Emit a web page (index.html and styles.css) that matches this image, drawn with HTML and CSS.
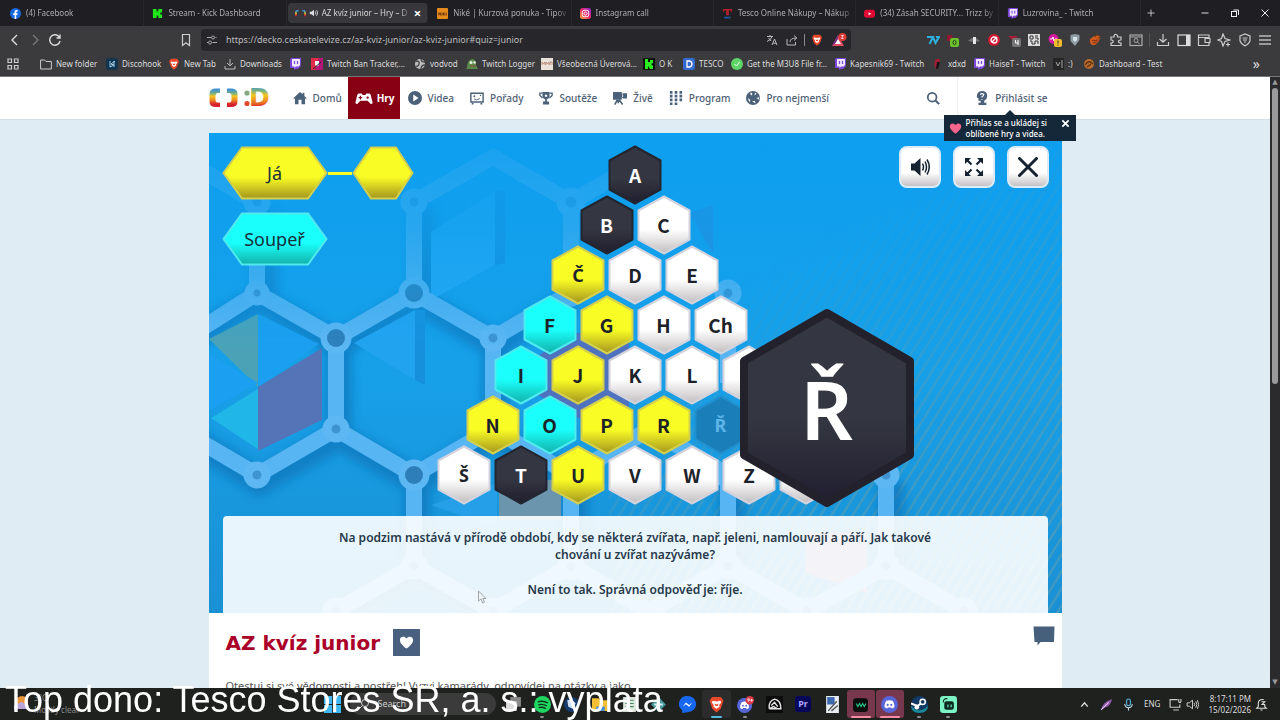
FILE: index.html
```html
<!DOCTYPE html>
<html lang="cs">
<head>
<meta charset="utf-8">
<title>AZ kvíz junior – Hry – Déčko</title>
<link rel="stylesheet" href="styles.css">
</head>
<body>
<svg class="defs" aria-hidden="true">
  <defs>
    <linearGradient id="gWhite" x1="0" y1="0" x2="0" y2="1"><stop offset=".58" stop-color="#fff"/><stop offset=".95" stop-color="#c9c5c7"/></linearGradient>
    <linearGradient id="gYellow" x1="0" y1="0" x2="0" y2="1"><stop offset=".58" stop-color="#fafd25"/><stop offset=".98" stop-color="#a89a1f"/></linearGradient>
    <linearGradient id="gCyan" x1="0" y1="0" x2="0" y2="1"><stop offset=".58" stop-color="#1afffb"/><stop offset=".98" stop-color="#12b5ad"/></linearGradient>
    <linearGradient id="gDark" x1="0" y1="0" x2="0" y2="1"><stop offset=".55" stop-color="#343741"/><stop offset=".95" stop-color="#232131"/></linearGradient>
    <linearGradient id="gRain" x1="0" y1="0" x2="0" y2="1"><stop offset=".05" stop-color="#3f8fd6"/><stop offset=".25" stop-color="#6fae8a"/><stop offset=".42" stop-color="#f3c61f"/><stop offset=".62" stop-color="#ee8a22"/><stop offset=".85" stop-color="#d8232f"/></linearGradient>
    <linearGradient id="gInsta" x1="0" y1="1" x2="1" y2="0"><stop offset="0" stop-color="#fdb03c"/><stop offset=".5" stop-color="#e8266b"/><stop offset="1" stop-color="#8a2be0"/></linearGradient>
  </defs>
  <symbol id="hex" viewBox="0 0 54 60"><path d="M27 1.500 52.500 15.500V44.500L27 58.500 1.500 44.500V15.500Z" stroke-width="2" stroke-linejoin="round"/></symbol>
  <symbol id="twitch" viewBox="0 0 12 12"><path d="M2 0h10v8l-3 3H7l-2 1V10H1V2Z" fill="#7b45d8"/><path d="M3 1h8v6L9.500 8.500H7L5.500 10V8.500H3Z" fill="#efe6ff"/><path d="M5.500 3v3M8.500 3v3" stroke="#7b45d8" stroke-width="1.200"/></symbol>
  <symbol id="kick" viewBox="0 0 12 12"><path d="M1 1h4v3h1V3h1V1h4v4H9v2h2v4H7V9H6V8H5v3H1Z" fill="#1fe81a"/></symbol>
  <symbol id="brave" viewBox="0 0 16 16"><path d="M4 1h8l1.500 1.500 1 2-.7 2L12 12l-4 3.500L4 12 2.200 6.500l-.7-2 1-2Z" fill="#e8492b"/><path d="M4.500 4.500 8 5.200l3.500-.7 1 1.500-2 2.500.3 1.500L8 12l-2.800-2 .3-1.500-2-2.500Z" fill="#fff"/><path d="M6 7l2 1 2-1-1 2.500H7Z" fill="#e8492b"/></symbol>
  <symbol id="discord" viewBox="0 0 16 16"><circle cx="8" cy="8" r="8" fill="#5865d8"/><path d="M5 4.500c2-.8 4-.8 6 0 1.300 2 1.800 4 1.600 6.200-.8.6-1.600 1-2.400 1.100l-.6-1H6.400l-.6 1c-.8-.1-1.600-.5-2.400-1.100C3.200 8.500 3.700 6.500 5 4.500Z" fill="#fff"/><circle cx="6.300" cy="8.300" r="1" fill="#5865d8"/><circle cx="9.700" cy="8.300" r="1" fill="#5865d8"/></symbol>
  <symbol id="heart" viewBox="0 0 16 16"><path d="M8 14.500C3 10.500 1 8 1 5.200 1 1.500 5.800.5 8 3.800 10.200.5 15 1.500 15 5.200 15 8 13 10.500 8 14.500Z"/></symbol>
</svg>

<header class="chrome">
  <div class="tabstrip">
    <div class="tabs" role="tablist">
      <button class="tab" role="tab"><svg viewBox="0 0 12 12"><circle cx="6" cy="6" r="6" fill="#1868e0"/><path d="M5 12V7.500H3.500V5.700H5V4.400C5 2.800 6 2.100 8.300 2.300V4H7.500C6.900 4 6.800 4.300 6.800 5.700H8.300L8 7.500H6.800V12Z" fill="#fff"/></svg><span>(4) Facebook</span></button>
      <button class="tab" role="tab"><svg><use href="#kick"/></svg><span>Stream - Kick Dashboard</span></button>
      <button class="tab active" role="tab" aria-selected="true"><svg viewBox="0 0 12 12"><path d="M4 3H2.500Q1 3 1 5v4M8 3h1.500Q11 3 11 5v4" fill="none" stroke="url(#gRain)" stroke-width="1.800"/></svg><svg class="sound" viewBox="0 0 12 12"><path d="M1 4.500h2L6 2v8L3 7.500H1Z" fill="#ddd"/><path d="M7.500 4Q9 6 7.500 8M9 2.500Q12 6 9 9.500" fill="none" stroke="#ddd"/></svg><span>AZ kvíz junior – Hry – D</span><b>×</b></button>
      <button class="tab" role="tab"><svg viewBox="0 0 12 12"><rect width="12" height="12" rx="1" fill="#e58a1c"/><path d="M2 8V5l2 3V5M5.500 5v3M7 5v3M9 5 7 6.500 9 8M10 8V5" stroke="#5a2c08" fill="none" stroke-width=".9"/></svg><span>Niké | Kurzová ponuka - Tipov</span></button>
      <button class="tab" role="tab"><svg viewBox="0 0 12 12"><rect width="12" height="12" rx="3" fill="url(#gInsta)"/><rect x="2.500" y="2.500" width="7" height="7" rx="2" fill="none" stroke="#fff"/><circle cx="6" cy="6" r="1.700" fill="none" stroke="#fff"/></svg><span>Instagram call</span></button>
      <button class="tab" role="tab"><svg viewBox="0 0 12 12"><path d="M1 1h10v3H9.500V2.500h-2V8h-3V2.500h-2V4H1Z" fill="#b3202c"/><path d="M2 9.500h8L8.500 11.500H3Z" fill="#17599c"/></svg><span>Tesco Online Nákupy – Nákup</span></button>
      <button class="tab" role="tab"><svg viewBox="0 0 12 12"><rect y="2" width="12" height="8.500" rx="2.500" fill="#e00a35"/><path d="m5 4.500 3 1.700-3 1.800Z" fill="#fff"/></svg><span>(34) Zásah SECURITY... Trizz by</span></button>
      <button class="tab" role="tab"><svg><use href="#twitch"/></svg><span>Luzrovina_ - Twitch</span></button>
    </div>
    <button class="newtab" aria-label="New tab"><svg viewBox="0 0 10 10"><path d="M5 1.500v7M1.500 5h7" stroke="#bbb"/></svg></button>
    <div class="winctl">
      <button aria-label="Minimize"><svg viewBox="0 0 10 10"><path d="M1.500 5h7" stroke="#ddd"/></svg></button>
      <button aria-label="Restore"><svg viewBox="0 0 10 10"><rect x="1.500" y="3.500" width="5" height="5" fill="none" stroke="#eee"/><path d="M3.500 2h5v5" fill="none" stroke="#eee"/></svg></button>
      <button aria-label="Close"><svg viewBox="0 0 10 10"><path d="m1.500 1.500 7 7m0-7-7 7" stroke="#eee"/></svg></button>
    </div>
  </div>

  <div class="toolbar">
    <div class="navbtns">
      <button aria-label="Back"><svg viewBox="0 0 14 14"><path d="M9 2 4 7l5 5" fill="none" stroke="#ddd" stroke-width="1.400"/></svg></button>
      <button aria-label="Forward"><svg viewBox="0 0 14 14"><path d="m5 2 5 5-5 5" fill="none" stroke="#77777b" stroke-width="1.400"/></svg></button>
      <button aria-label="Reload"><svg viewBox="0 0 14 14"><path d="M11.500 4.500A5.200 5.200 0 1 0 12 8M12 1.500v3.500H8.500" fill="none" stroke="#ddd" stroke-width="1.400"/></svg></button>
    </div>
    <button class="mark" aria-label="Bookmark"><svg viewBox="0 0 14 14"><path d="M3.500 1.500h7v11L7 9.800l-3.500 2.700Z" fill="none" stroke="#ccc" stroke-width="1.200"/></svg></button>
    <div class="urlbar">
      <svg viewBox="0 0 12 12"><path d="M1 3.500h4M9.500 3.500h1M1 8.500h1M6.500 8.500H11" stroke="#aaa"/><circle cx="7" cy="3.500" r="1.500" fill="none" stroke="#aaa"/><circle cx="4" cy="8.500" r="1.500" fill="none" stroke="#aaa"/></svg>
      <input aria-label="Address" value="https://decko.ceskatelevize.cz/az-kviz-junior/az-kviz-junior#quiz=junior">
      <button aria-label="Translate"><svg viewBox="0 0 12 12"><path d="M1 2.500h6M4 1v1.500M6 2.500Q5 6 1 7.500M2.500 4 5 7M6 11l2.500-6L11 11M7 9.200h3" fill="none" stroke="#bbb"/></svg></button>
      <button aria-label="Share"><svg viewBox="0 0 12 12"><path d="M1 5v6h8.500V8M4 8Q4 4 10.500 4M8 1.500 10.800 4 8 6.500" fill="none" stroke="#bbb"/></svg></button>
      <i></i>
      <button aria-label="Shields"><svg><use href="#brave"/></svg></button>
      <button aria-label="Rewards" class="wide"><svg viewBox="0 0 16 14"><path d="M7 2 13 13H1Z" fill="#e64a62"/><path d="M1 13 7 2v6.500Z" fill="#7a2d8c"/><path d="m7 6 3 5H4Z" fill="#fff"/><circle cx="11.500" cy="4" r="4" fill="#dd3a36"/><path d="M10.300 2.500h2L10.500 5.500h2" stroke="#fff" fill="none" stroke-width=".8"/></svg></button>
    </div>
    <div class="exts">
      <svg viewBox="0 0 14 14"><path d="M1 4h6L3.500 11M7.500 5l2 5 3.500-6h-3" fill="none" stroke="#2bb0df" stroke-width="2"/></svg>
      <svg viewBox="0 0 14 14"><path d="M1 2h5l1 6H1Z" fill="#8f1731"/><rect x="4" y="5" width="9" height="9" rx="2" fill="#6dc12c"/><ellipse cx="8.500" cy="9.500" rx="1.500" ry="2.200" fill="none" stroke="#24420d"/></svg>
      <svg viewBox="0 0 14 14"><path d="M1 8Q7 1 13 8Q7 10 1 8Z" fill="#6f7273"/><path d="M6 4h3v7H6Z" fill="#e6e6e6"/></svg>
      <svg viewBox="0 0 14 14"><circle cx="7" cy="7" r="6" fill="#d31834"/><circle cx="7" cy="7" r="3" fill="none" stroke="#fff" stroke-width="1.300"/><path d="m5 9 5-5" stroke="#fff" stroke-width="1.300"/></svg>
      <svg viewBox="0 0 14 14"><path d="M1 3h10L6 8Z" fill="#a61d36"/><rect x="5" y="5" width="9" height="9" rx="2" fill="#757575"/><path d="M8.500 7v3h3M11 7v5" stroke="#fff" fill="none"/></svg>
      <svg viewBox="0 0 14 14"><path d="M1 1h12v12H1Z" fill="#ddd"/><path d="M3 3h3v3H3ZM8 3h3M8 5h3v2M3 8h2v3h3V8h3v3" stroke="#333" fill="none"/></svg>
      <svg viewBox="0 0 14 14"><circle cx="5.500" cy="6" r="5" fill="#d21aa0"/><path d="M2 6h2l1-2 1 4 1-2h2" stroke="#fff" fill="none"/><rect x="6" y="6" width="8" height="8" rx="2" fill="#f1bd2c"/><path d="M10 7.500v3M10 11.500v1" stroke="#333"/></svg>
      <svg viewBox="0 0 14 14"><path d="M2.500 2 7 1l4.500 1v5L7 13 2.500 8Z" fill="#8e9da4"/><path d="M5 4h4v3L7 9 5 7Z" fill="#d6e4e8"/></svg>
      <svg viewBox="0 0 14 14"><path d="M2 6Q7 1 12 3Q12 9 7 12Q1 13 2 6Z" fill="#cb5a1c"/><path d="M7 4 9 1M10 5l3-2M4 8l6-1M5 10l4-1" stroke="#7d3311"/></svg>
      <svg viewBox="0 0 14 14"><path d="M2 4h3Q5 1 7 1.500T8.500 4H12v3q-2.500 0-2.500 1.500T12 10v2.500H2V10q2.200 0 2.200-1.600T2 7Z" fill="none" stroke="#ccc" stroke-width="1.200"/></svg>
      <svg viewBox="0 0 14 14"><rect x="1" y="2" width="12" height="10.500" fill="none" stroke="#aaa" stroke-width="1.200"/><path d="M1 4h12" stroke="#aaa"/><circle cx="7" cy="7.500" r="2" fill="none" stroke="#aaa"/><path d="m8.500 9 2 2" stroke="#aaa"/></svg>
      <i></i>
      <svg viewBox="0 0 14 14"><path d="M7 1v8M3.500 6 7 9.300 10.500 6M1.500 9v3.500h11V9" fill="none" stroke="#ccc" stroke-width="1.200"/></svg>
      <svg viewBox="0 0 14 14"><rect x="1" y="2" width="12" height="10.500" fill="none" stroke="#ddd" stroke-width="1.200"/><path d="M9 2h4v10.500H9Z" fill="#ddd"/></svg>
      <svg viewBox="0 0 14 14"><path d="M12 5V2H1.500v10.500H12V10M1.500 4.500H12M8 5.500h5v4H8Z" fill="none" stroke="#ccc" stroke-width="1.200"/></svg>
      <svg viewBox="0 0 14 14"><path d="M6 1 8 5.500 12.500 7 8 8.500 6 13 4.500 8.500 1 7 4.500 5.500ZM11 9.500v4M9 11.500h4" fill="none" stroke="#ccc" stroke-width="1.200"/></svg>
      <svg viewBox="0 0 14 14"><path d="M2 3 7 1l5 2v5q-1 3-5 5-4-2-5-5ZM4.500 5h5M5 7h4M6 9h2" fill="none" stroke="#ccc" stroke-width="1.200"/></svg>
      <svg viewBox="0 0 14 14"><path d="M1 3h12M1 7h12M1 11h12" stroke="#bbb" stroke-width="1.500"/></svg>
    </div>
  </div>

  <nav class="bookmarks" aria-label="Bookmarks">
    <a href="#" aria-label="All bookmarks"><svg viewBox="0 0 12 12"><path d="M1 1h3.500v3.500H1ZM7.500 1H11v3.500H7.500ZM1 7.500h3.500V11H1ZM7.500 7.500H11V11H7.500Z" fill="none" stroke="#ccc" stroke-width="1.200"/></svg></a>
    <a href="#"><svg viewBox="0 0 12 12"><path d="M.6 2H4.500L6 3.500h5.400V11H.6Z" fill="none" stroke="#ccc"/></svg>New folder</a>
    <a href="#"><svg viewBox="0 0 12 12"><rect width="12" height="12" rx="3" fill="#10354d"/><path d="M4 3v6l4-2-3-1 4-3M8 3v6" stroke="#9fd2e5" fill="none"/></svg>Discohook</a>
    <a href="#"><svg><use href="#brave"/></svg>New Tab</a>
    <a href="#"><svg viewBox="0 0 12 12"><path d="M6 1v6.500M3 5l3 2.800L9 5M1 8v3h10V8" fill="none" stroke="#bbb"/></svg>Downloads</a>
    <a href="#" aria-label="Twitch"><svg><use href="#twitch"/></svg></a>
    <a href="#"><svg viewBox="0 0 12 12"><path d="M0 0h12v12H0Z" fill="#b3157a"/><path d="M0 0h8L4 12H0Z" fill="#e02c48"/><path d="M4 3h4v4L6 8.500 4 7Z" fill="#fff"/><path d="m2 11 8-7" stroke="#222"/></svg>Twitch Ban Tracker,...</a>
    <a href="#"><svg viewBox="0 0 12 12"><circle cx="6" cy="6" r="5" fill="#bdbdbd"/><path d="M2 3q4 0 3 3t-3 2M7 1q0 3 4 3M7 11q0-4 4-4" stroke="#444" fill="none" stroke-width="1.300"/></svg>vodvod</a>
    <a href="#"><svg viewBox="0 0 12 12"><path d="M1 10Q1 2 6 1q5 1 4 6l2 4H0Z" fill="#598c48"/><circle cx="5" cy="4.500" r="1.500" fill="#e3efe0"/><circle cx="8.500" cy="4.500" r="1.300" fill="#e3efe0"/><path d="M4 8h6" stroke="#9c493b"/></svg>Twitch Logger</a>
    <a href="#"><svg viewBox="0 0 12 12"><path d="M0 0h12v12H0Z" fill="#ece2dc"/><path d="M1 7V4l1.500 2L4 4v3M5 7V4l1.500 2L8 4v3M9 7V4h2v3" stroke="#b5806f" fill="none" stroke-width=".8"/></svg>Všeobecná Úverová...</a>
    <a href="#"><svg viewBox="0 0 12 12"><path d="M0 0h12v12H0Z" fill="#071407"/><path d="M2 1h3v3h2V2h3v3L8 6l2 2v3H7L5 8v3H2Z" fill="#2bea22"/></svg>O K</a>
    <a href="#"><svg viewBox="0 0 12 12"><rect width="12" height="12" rx="2" fill="#356bd0"/><path d="M4 3h2.500Q9 3.500 9 6T6.500 9H4Z" fill="none" stroke="#fff" stroke-width="1.300"/></svg>TESCO</a>
    <a href="#"><svg viewBox="0 0 12 12"><circle cx="6" cy="6" r="6" fill="#5fd469"/><path d="m3.500 6 2 2 3-4" stroke="#e8ffe9" fill="none"/></svg>Get the M3U8 File fr...</a>
    <a href="#"><svg><use href="#twitch"/></svg>Kapesnik69 - Twitch</a>
    <a href="#"><svg viewBox="0 0 12 12"><path d="M3 2Q8-1 8 3L6 11Q1 11 3 2Z" fill="#a01f36"/><path d="M5 4h3L6 11H4Z" fill="#171417"/></svg>xdxd</a>
    <a href="#"><svg><use href="#twitch"/></svg>HaiseT - Twitch</a>
    <a href="#"><svg viewBox="0 0 12 12"><path d="M1 0h11v12H1Z" fill="#252525"/><path d="m4 4 2 4 2-4M10 2v8" stroke="#aaa" fill="none"/></svg>:)</a>
    <a href="#"><svg viewBox="0 0 12 12"><circle cx="6" cy="6" r="5" fill="#b76b2b"/><path d="M2 7q4-6 8-1M4 9l4-3" stroke="#5e3010" fill="none" stroke-width="1.300"/></svg>Dashboard - Test</a>
    <button aria-label="More bookmarks">»</button>
  </nav>
</header>

<div class="viewport">
  <div class="site">
    <header class="sitehead">
      <div class="wrap headrow">
        <a class="logo" href="#" aria-label="ČT :D"><svg viewBox="0 0 60 22"><path d="M11 1.500H7Q.5 1.500.5 7v7.500Q.5 20 7 20h4v-4.500H8.500Q6.500 15.500 6.500 13V8.500Q6.500 6 8.500 6H11ZM18 1.500h4Q28.500 1.500 28.500 7v7.500Q28.500 20 22 20h-4v-4.500h2.500q2 0 2-2.500V8.500Q22.500 6 20.500 6H18Z" fill="url(#gRain)"/><circle cx="38" cy="6" r="2.600" fill="#86a87e"/><circle cx="38" cy="16.500" r="2.600" fill="#e04a2c"/><text x="40" y="19" class="logo-d" fill="url(#gRain)">D</text></svg></a>
        <nav class="mainnav">
          <a href="#"><svg viewBox="0 0 16 16"><path d="M8 1 0 8.500h2.300V15h4V10h3.400v5h4V8.500H16L13 5.600V2h-2v1.800Z"/></svg>Domů</a>
          <a href="#" class="current"><svg viewBox="0 0 20 14"><path d="M4.500 1.500h3L8.500 3h3l1-1.500h3Q17 1.500 17.500 3L19.500 11.500Q19.500 13.500 17.500 13L14 9.500H6L2.500 13Q.5 13.500.5 11.500L2.500 3Q3 1.500 4.500 1.500Z"/><path d="M6 4v4M4 6h4" stroke="#870013" stroke-width="1.200"/><circle cx="14" cy="6" r="1.300" fill="#870013"/></svg>Hry</a>
          <a href="#"><svg viewBox="0 0 16 16"><path d="M8 0a8 8 0 1 0 0 16A8 8 0 0 0 8 0ZM6 4l6 4-6 4Z" fill-rule="evenodd"/></svg>Videa</a>
          <a href="#"><svg viewBox="0 0 16 16"><path d="M1 2.500h14v10H1ZM2 14.500h2M12 14.500h2" fill="none" stroke="#4a6179" stroke-width="1.600"/><circle cx="5" cy="6" r="1.100"/><circle cx="12" cy="5" r=".8"/><path d="M4.500 9q3 2 6 0l1-1" fill="none" stroke="#4a6179"/></svg>Pořady</a>
          <a href="#"><svg viewBox="0 0 16 16"><path d="M4 1h8v5.500Q11 9 9 9.500V12h2.500v3.500h-7V12H7V9.500Q5 9 4 6.500Z"/><path d="M4 2.500H1V5l3 3M12 2.500h3V5l-3 3" fill="none" stroke="#4a6179" stroke-width="1.500"/><path d="m8 3 .6 1.500H10L9 5.500l.3 1.500L8 6.200 6.700 7 7 5.500 6 4.500h1.400Z" fill="#fff"/></svg>Soutěže</a>
          <a href="#"><svg viewBox="0 0 16 16"><path d="M0 1h10v2.500l2-1h4v6h-4l-2-1V10H0Z"/><path d="m5 10-3 5.500M6 10v4M7 10l4 5.500" stroke="#4a6179" stroke-width="1.800"/><path d="M11 4v3" stroke="#fff"/></svg>Živě</a>
          <a href="#"><svg viewBox="0 0 16 16"><path d="M1 0h3v3H1ZM6.500 0h3v3h-3ZM12 0h3v3h-3ZM1 4.300h3v3H1ZM6.500 4.300h3v3h-3ZM12 4.300h3v3h-3ZM1 8.600h3v3H1ZM6.500 8.600h3v3h-3ZM12 8.600h3v3h-3ZM1 13h3v3H1ZM6.500 13h3v3h-3Z"/></svg>Program</a>
          <a href="#"><svg viewBox="0 0 16 16"><circle cx="8" cy="8" r="8"/><path d="M5 2h2v3L5 4ZM10 2l2 1-2 2ZM2 8l3 2-1 3ZM7 12l3-1 1 3ZM12 8l3-1v3Z" fill="#fff"/></svg>Pro nejmenší</a>
        </nav>
        <button class="find" aria-label="Hledat"><svg viewBox="0 0 16 16"><circle cx="7" cy="7" r="5" fill="none" stroke="#4a6179" stroke-width="2"/><path d="m10.500 10.500 4.500 4.500" stroke="#4a6179" stroke-width="2.400"/></svg></button>
        <div class="login">
          <a href="#"><svg viewBox="0 0 16 16"><path d="M8 0Q14 0 14 6q0 3-3.500 5v2.500H13V16H4v-2.500h2.500V11H4V8.500L2 7Q2 0 8 0Z"/><path d="M6 4q2-2 4 0 0 1.500-2 2.500v1M8 9v1" stroke="#fff" fill="none" stroke-width="1.300"/></svg>Přihlásit se</a>
          <div class="tip"><svg><use href="#heart"/></svg><p>Přihlas se a ukládej si<br>oblíbené hry a videa.</p><button aria-label="Zavřít"><svg viewBox="0 0 10 10"><path d="m1.500 1.500 7 7m0-7-7 7" stroke="#fff" stroke-width="2"/></svg></button></div>
        </div>
      </div>
    </header>

    <main class="wrap page">
      <section class="game">
        <svg class="scene" viewBox="0 0 853 480" preserveAspectRatio="xMidYMid slice" aria-hidden="true">
          <defs>
            <linearGradient id="sky" x1="0" y1="0" x2="0" y2="1"><stop offset="0" stop-color="#0d9ff0"/><stop offset=".5" stop-color="#17a0e8"/><stop offset="1" stop-color="#1a90d4"/></linearGradient>
            <linearGradient id="fadeV" x1="0" y1="0" x2="0" y2="1"><stop offset="0" stop-color="#222"/><stop offset=".2" stop-color="#555"/><stop offset=".45" stop-color="#fff"/></linearGradient>
            <mask id="mV"><rect width="853" height="480" fill="url(#fadeV)"/></mask>
            <linearGradient id="fadeD" x1=".4" y1=".15" x2=".8" y2=".9"><stop offset=".1" stop-color="#000"/><stop offset=".7" stop-color="#ddd"/></linearGradient>
            <mask id="mD"><rect x="400" width="453" height="480" fill="url(#fadeD)"/></mask>
            <pattern id="lines" width="9" height="9" patternUnits="userSpaceOnUse" patternTransform="rotate(32)"><path d="M1.500 0V9" stroke="#4f9cb8" stroke-width="2"/></pattern>
            <filter id="soft"><feGaussianBlur stdDeviation="5"/></filter>
          </defs>
          <rect width="853" height="480" fill="url(#sky)"/>
          <rect x="400" width="453" height="480" fill="url(#lines)" mask="url(#mD)"/>
          <g mask="url(#mV)">
            <g fill="none" stroke="#0b6fb4" stroke-width="26" opacity=".6" filter="url(#soft)">
              <path d="M-30 212 50 167 130 212 208 167 286 212 364 167M-30 298 50 349 130 304 208 349 286 304 364 349M130 212v92M286 212v92M208 349v92l78 40M208 441l-78 40M366 349v92M523 349v92M682 349v92M56 75v90M214 75v90"/>
            </g>
            <path d="M0 206 49 181V254Z" fill="#4ba2b6"/><path d="M49 254V181L110 211Z" fill="#1b9ff0"/><path d="M0 221 49 250 0 278Z" fill="#1b9ff0"/><path d="M49 254 113 215V287L49 318Z" fill="#5574b8"/><path d="M49 256V316L2 285Z" fill="#20b6e8"/>
            <path d="M206 177h10v75L206 247Z" fill="#1690db"/><path d="M145 210 206 177V247Z" fill="#22a3f0"/><path d="M286 58h10v72l-10 2Z" fill="#128cdc"/><path d="M222 99 286 58V132L222 167Z" fill="#25a9f6"/>
            <path d="M290 347h62v40h-62Z" fill="#6b94ad"/><path d="M222 372 288 350V395Z" fill="#259fe8"/><path d="M480 80 504 72V120Z" fill="#2b84d6"/><path d="M300 245 360 200H420V310L360 280Z" fill="#4f72bf"/><path d="M596 400h62v60l-62-20Z" fill="#8a82b5"/>
            <g fill="none" stroke="#58b5f3" stroke-width="16">
              <path d="M-30 210 48 160 127 205 205 160 284 205 362 160M-30 296 48 342 127 296 205 342 284 296 362 342 441 296 519 342M127 205v91M284 205v91M48 70v90M205 70v90M205 69 284 24 362 69V160M362 69 441 24M48 69-20 30M205 342v91L127 478M205 433l79 45 78-45V342M519 342v91l79 45 79-45V342M677 433l78 45M519 433l-79 45-78-45M519 160V250"/>
            </g>
            <g fill="#3f93d0" stroke="#5db7f3" stroke-width="9">
              <circle cx="48" cy="160" r="8"/><circle cx="127" cy="205" r="11"/><circle cx="205" cy="160" r="11"/><circle cx="284" cy="205" r="9"/><circle cx="362" cy="160" r="9"/><circle cx="48" cy="342" r="9"/><circle cx="127" cy="296" r="9"/><circle cx="205" cy="342" r="11"/><circle cx="48" cy="69" r="9"/><circle cx="205" cy="69" r="9"/><circle cx="362" cy="69" r="10"/><circle cx="205" cy="433" r="9"/><circle cx="127" cy="478" r="9"/><circle cx="284" cy="478" r="9"/><circle cx="362" cy="433" r="9"/><circle cx="519" cy="160" r="9"/><circle cx="519" cy="342" r="9"/><circle cx="519" cy="433" r="9"/><circle cx="598" cy="478" r="9"/><circle cx="677" cy="342" r="9"/><circle cx="677" cy="433" r="9"/><circle cx="755" cy="478" r="9"/>
            </g>
            <g fill="#2e7fb9"><circle cx="127" cy="205" r="9"/><circle cx="205" cy="160" r="9"/><circle cx="205" cy="342" r="9"/></g>
          </g>
        </svg>

        <div class="stage">
          <div class="players">
            <div class="player yellow"><svg viewBox="0 0 106 54"><path d="M20 1.500h66L104.500 27 86 52.500H20L1.500 27Z" stroke-width="2"/></svg><span>Já</span></div>
            <i class="link"></i>
            <div class="token yellow"><svg viewBox="0 0 62 54"><path d="M19 1.500h25L60.500 27 44 52.500H19L1.500 27Z" stroke-width="2"/></svg></div>
            <div class="player cyan"><svg viewBox="0 0 106 54"><path d="M20 1.500h66L104.500 27 86 52.500H20L1.500 27Z" stroke-width="2"/></svg><span>Soupeř</span></div>
          </div>
          <div class="board">
            <div class="row"><button class="cell dark"><svg><use href="#hex"/></svg><span>A</span></button></div>
            <div class="row"><button class="cell dark"><svg><use href="#hex"/></svg><span>B</span></button><button class="cell"><svg><use href="#hex"/></svg><span>C</span></button></div>
            <div class="row"><button class="cell yellow caron"><svg><use href="#hex"/></svg><span>Č</span></button><button class="cell"><svg><use href="#hex"/></svg><span>D</span></button><button class="cell"><svg><use href="#hex"/></svg><span>E</span></button></div>
            <div class="row"><button class="cell cyan"><svg><use href="#hex"/></svg><span>F</span></button><button class="cell yellow"><svg><use href="#hex"/></svg><span>G</span></button><button class="cell"><svg><use href="#hex"/></svg><span>H</span></button><button class="cell"><svg><use href="#hex"/></svg><span>Ch</span></button></div>
            <div class="row"><button class="cell cyan"><svg><use href="#hex"/></svg><span>I</span></button><button class="cell yellow"><svg><use href="#hex"/></svg><span>J</span></button><button class="cell"><svg><use href="#hex"/></svg><span>K</span></button><button class="cell"><svg><use href="#hex"/></svg><span>L</span></button><button class="cell" aria-label="M"><svg><use href="#hex"/></svg></button></div>
            <div class="row"><button class="cell yellow"><svg><use href="#hex"/></svg><span>N</span></button><button class="cell cyan"><svg><use href="#hex"/></svg><span>O</span></button><button class="cell yellow"><svg><use href="#hex"/></svg><span>P</span></button><button class="cell yellow"><svg><use href="#hex"/></svg><span>R</span></button><button class="cell open caron"><svg><use href="#hex"/></svg><span>Ř</span></button><button class="cell" aria-label="S"><svg><use href="#hex"/></svg></button></div>
            <div class="row"><button class="cell caron"><svg><use href="#hex"/></svg><span>Š</span></button><button class="cell dark"><svg><use href="#hex"/></svg><span>T</span></button><button class="cell yellow"><svg><use href="#hex"/></svg><span>U</span></button><button class="cell"><svg><use href="#hex"/></svg><span>V</span></button><button class="cell"><svg><use href="#hex"/></svg><span>W</span></button><button class="cell"><svg><use href="#hex"/></svg><span>Z</span></button><button class="cell" aria-label="Ž"><svg><use href="#hex"/></svg></button></div>
          </div>
          <div class="tools">
            <button aria-label="Zvuk"><svg viewBox="0 0 20 20"><path d="M1 6.500h3.500L10.500 1v18L4.500 13.500H1Z" fill="#14232f"/><path d="M12.500 6.500Q14.500 10 12.500 13.500M15 4.500Q18 10 15 15.500M17 2.500Q21.500 10 17 17.500" fill="none" stroke="#14232f" stroke-width="1.500"/></svg></button>
            <button aria-label="Celá obrazovka"><svg viewBox="0 0 20 20"><path d="M1 1h6L1 7ZM19 1h-6l6 6ZM1 19h6l-6-6ZM19 19h-6l6-6Z" fill="#14232f"/><path d="m2 2 5.500 5.500M18 2l-5.500 5.500M2 18l5.500-5.500M18 18l-5.500-5.500" stroke="#14232f" stroke-width="2.200"/></svg></button>
            <button aria-label="Zavřít hru"><svg viewBox="0 0 20 20"><path d="m1.500 1.500 17 17m0-17-17 17" stroke="#14232f" stroke-width="3" stroke-linecap="round"/></svg></button>
          </div>
        </div>

        <div class="bighex"><svg viewBox="0 0 176 200"><path d="M88 5 171 53V147L88 195 5 147V53Z" fill="url(#gDark)" stroke="#23212c" stroke-width="8" stroke-linejoin="round"/></svg><span>Ř</span></div>

        <div class="question">
          <p>Na podzim nastává v přírodě období, kdy se některá zvířata, např. jeleni, namlouvají a páří. Jak takové chování u zvířat nazýváme?</p>
          <p>Není to tak. Správná odpověď je: říje.</p>
        </div>
      </section>

      <section class="about">
        <div class="titlerow">
          <h1>AZ kvíz junior</h1>
          <button class="fav" aria-label="Oblíbené"><svg><use href="#heart"/></svg></button>
          <button class="chat" aria-label="Komentáře"><svg viewBox="0 0 22 20"><path d="M.5.500H21.500L21 16H7.500L4.500 19.500V16H1.500Z" fill="#465f7a"/></svg></button>
        </div>
        <p>Otestuj si své vědomosti a postřeh! Vyzvi kamarády, odpovídej na otázky a jako</p>
      </section>
    </main>
  </div>
  <div class="scrollbar"><b>▲</b><i></i><b>▼</b></div>
</div>

<footer class="taskbar">
  <div class="weather"><svg viewBox="0 0 18 18"><circle cx="10" cy="7" r="6" fill="#e9963a"/><path d="M2 14q-1-5 4-5 3-4 7 0 5 0 3 5Z" fill="#b9a5d8"/></svg><div>3°C<br>Mostly clear</div></div>
  <div class="apps">
    <button aria-label="Start"><svg viewBox="0 0 16 16"><path d="M0 0h7.600v7.600H0ZM8.400 0H16v7.600H8.400ZM0 8.400h7.600V16H0ZM8.400 8.400H16V16H8.400Z" fill="#3fb7f3"/></svg></button>
    <label class="search"><svg viewBox="0 0 12 12"><circle cx="7" cy="5" r="3.500" fill="none" stroke="#ccc"/><path d="M4.500 7.500 1 11" stroke="#ccc"/></svg><input placeholder="Search" aria-label="Search"></label>
    <button aria-label="Task view"><svg viewBox="0 0 16 16"><path d="M5 1h10v9H5Z" fill="#888"/><path d="M1 5h10v9H1Z" fill="#ddd"/></svg></button>
    <button class="run" aria-label="Spotify"><svg viewBox="0 0 16 16"><circle cx="8" cy="8" r="8" fill="#1ed760"/><path d="M3.500 5.500q5-1.500 9.500 1M4 8.300q4-1.200 8 .9M4.500 11q3.500-1 6.500.8" fill="none" stroke="#10331b" stroke-width="1.300"/></svg></button>
    <button aria-label="Game"><svg viewBox="0 0 16 16"><circle cx="8" cy="8" r="7" fill="#143a6e"/><path d="M4 4q5-1 8 3l-3 5-4-2Z" fill="#cfe0f5"/></svg></button>
    <button aria-label="Files"><svg viewBox="0 0 16 16"><path d="M0 2h6l2 2h8v10H0Z" fill="#f5c033"/><path d="M4 10h8v4H4Z" fill="#3d8de0"/></svg></button>
    <button aria-label="Sheet"><svg viewBox="0 0 16 16"><path d="M2 1h12v14H2Z" fill="#dfe8de"/><path d="M4 4h8M4 7h8M4 10h8" stroke="#4b8b66"/></svg></button>
    <button aria-label="App"><svg viewBox="0 0 16 16"><path d="m8 1 7 7-7 7-7-7Z" fill="#4c9ba0"/><path d="M8 4v8M4 8h8" stroke="#d3efec" stroke-width="2"/></svg></button>
    <button aria-label="Messenger"><svg viewBox="0 0 16 16"><path d="M8 0a8 7.500 0 0 1 0 15.200L3 16v-2.500A7.500 7.500 0 0 1 8 0Z" fill="#1868ef"/><path d="m3.500 10 3-4 3 2.500 3-2.500-3 4-3-2.300Z" fill="#fff"/></svg></button>
    <button class="on" aria-label="Brave"><svg><use href="#brave"/></svg></button>
    <button class="run" aria-label="Discord"><svg viewBox="0 0 18 18"><use href="#discord" y="2" width="16" height="16"/><circle cx="13.500" cy="4.500" r="4.500" fill="#d83a45"/><path d="M11.500 4.500h1.500V3h-1.500ZM13 4.500 12 6M14 4.500h3M15.500 3v3" stroke="#fff" fill="none" stroke-width=".8"/></svg></button>
    <button aria-label="Notes"><svg viewBox="0 0 16 16"><path d="M0 0h16v16H0Z" fill="#0c0c0c"/><path d="M3 12Q2 5 8 3q6 1 6 9H3M5 9l3-3 3 4M3 12l4-2 4 2" stroke="#e6e6e6" fill="none" stroke-width="1.300"/></svg></button>
    <button class="pr" aria-label="Premiere"><b>Pr</b></button>
    <button aria-label="Photo"><svg viewBox="0 0 16 16"><path d="M2 0h12v16H2Z" fill="#e9eef2"/><path d="M3 1h7v7H3Z" fill="#3c68b0"/><path d="m4 14 8-9M7 14l6-5" stroke="#555" stroke-width="1.300"/></svg></button>
    <button class="alert" aria-label="Streaming"><svg viewBox="0 0 16 16"><rect x="1" y="2" width="14" height="13" rx="3" fill="#090d0c"/><path d="m4 7 1.500 3L7 7l1.500 3L10 7l1.500 3L13 7" stroke="#27c98c" fill="none"/></svg></button>
    <button class="alert" aria-label="Discord call"><svg><use href="#discord"/></svg></button>
    <button class="run" aria-label="Steam"><svg viewBox="0 0 16 16"><circle cx="8" cy="8" r="8" fill="#123864"/><path d="M0 9Q8 18 16 9q0 7-8 7T0 9Z" fill="#1a8797"/><circle cx="11" cy="5.500" r="2.500" fill="none" stroke="#fff" stroke-width="1.400"/><path d="M0 7 6 9.500 9.500 7" stroke="#fff" fill="none" stroke-width="2"/><circle cx="5.500" cy="10.500" r="2.200" fill="#fff"/></svg></button>
    <button class="run" aria-label="Streamlabs"><svg viewBox="0 0 16 16"><rect width="16" height="16" rx="3" fill="#7bf5c6"/><rect x="4" y="5" width="9" height="8" rx="2" fill="#0b2a20"/><path d="M3 6q0-4 4-3.500" stroke="#0b2a20" fill="none"/><path d="M7.500 8v2.500M10.500 8v2.500" stroke="#7bf5c6"/></svg></button>
  </div>
  <div class="tray">
    <svg viewBox="0 0 12 12"><path d="m3 8 3-3.500L9 8" fill="none" stroke="#ddd" stroke-width="1.300"/></svg>
    <svg viewBox="0 0 12 12"><path d="M1 11Q2 4 11 1 10 8 4 9Z" fill="#9157ac"/><path d="M1 11 8 4" stroke="#e2c4f0"/></svg>
    <svg viewBox="0 0 12 12"><rect x="4.200" y="1" width="3.600" height="6" rx="1.800" fill="none" stroke="#4aa0c6" stroke-width="1.200"/><path d="M2.500 5.500q.5 3.500 3.500 3.500t3.500-3.500M6 9v2.500" fill="none" stroke="#c5dbe4"/></svg>
    <span>ENG</span>
    <div class="status">
      <svg viewBox="0 0 12 12"><path d="M8 1.500H1v7h9V6M4 11h5M9 1v3M11 1v3M9 4h2" fill="none" stroke="#ccc"/></svg>
      <svg viewBox="0 0 12 12"><path d="M1 4.500h2L6 2v8L3 7.500H1ZM7.500 4.500q1 1.500 0 3M9 3q2 3 0 6M10.500 2q2.500 4 0 8" fill="none" stroke="#ccc" stroke-width=".9"/></svg>
    </div>
    <div class="status">
      <time>8:17:11 PM<br>15/02/2026</time>
      <svg viewBox="0 0 12 12"><path d="M8 1.500Q3 1 3 5v3L1.500 9.500h9L9 8V6M5 11h2M6 3.500h3L6.500 6h3" fill="none" stroke="#ddd"/></svg>
    </div>
  </div>
</footer>

<div class="caption">Top dono: Tesco Stores SR, a. s.: vyplata</div>
<svg class="cursor" viewBox="0 0 10 14"><path d="M1.500 1v10l2.500-2 1.700 4 1.800-.8L5.800 8.500H9Z" fill="#eef3f7" stroke="#8b939b" stroke-width=".8"/></svg>
</body>
</html>
```

FILE: styles.css
```css
* { box-sizing: border-box; }
html, body { height: 100%; }
body {
  margin: 0;
  display: flex;
  flex-direction: column;
  overflow: hidden;
  background: #dfecf3;
  font-family: "Noto Sans", sans-serif;
}
button { border: 0; padding: 0; margin: 0; background: none; font: inherit; color: inherit; }
a { color: inherit; text-decoration: none; }
p, h1 { margin: 0; }
svg { display: block; flex: none; }
.defs { position: absolute; width: 0; height: 0; }

/* Browser chrome */
.chrome { flex: none; background: #3b3b3e; color: #dcdcdc; font: 8px/12px "Noto Sans", sans-serif; border-bottom: 1px solid #777; }
.tabstrip { display: flex; align-items: center; height: 26px; background: #1f1f23; }
.tabs { display: grid; grid-template-columns: repeat(8, minmax(0, 1fr)); flex: 0 1 1139px; margin-left: 2px; height: 26px; }
.tab { display: flex; align-items: center; gap: 5px; min-width: 0; padding: 0 1px 0 8px; color: #adadb0; text-align: left; border-right: 1px solid #29292d; }
.tab svg { width: 11px; height: 11px; }
.tab span { flex: 1; min-width: 0; overflow: hidden; white-space: nowrap; mask-image: linear-gradient(90deg, #000 88%, transparent); }
.tab.active { background: #38383c; color: #d8d8d8; border-radius: 4px; margin: 3px 1px; gap: 3px; padding: 0 6px 0 7px; }
.tab.active .sound { width: 10px; height: 10px; }
.tab b { font-size: 13px; color: #fff; }
.newtab { width: 20px; display: grid; place-items: center; }
.newtab svg, .winctl svg { width: 10px; height: 10px; }
.winctl { display: flex; margin-left: auto; }
.winctl button { width: 30px; display: grid; place-items: center; }

.toolbar { display: flex; align-items: center; height: 28px; padding: 0 8px; font-size: 9px; }
.toolbar svg { width: 14px; height: 14px; }
.navbtns { display: flex; gap: 6px; }
.mark { margin-left: 117px; }
.urlbar { display: flex; align-items: center; gap: 8px; flex: 0 1 650px; height: 22px; margin-left: 8px; padding: 0 4px 0 5px; background: #27272b; border-radius: 4px; }
.urlbar svg { width: 12px; height: 12px; }
.urlbar .wide svg { width: 16px; height: 14px; }
.urlbar input { flex: 1; min-width: 0; padding: 0; border: 0; outline: 0; background: none; color: #bcbcbe; font: inherit; }
.urlbar i { width: 1px; height: 12px; background: #888; margin: 0 -2px; }
.exts { display: flex; align-items: center; justify-content: space-between; flex: 1; max-width: 346px; margin-left: auto; }
.exts i { width: 1px; height: 14px; background: #555; }

.bookmarks {
  display: grid;
  grid-template-columns: 33px 66px 62px 56px 65px 22px 103px 52px 75px 102px 40px 48px 103px 98px 41px 79px 31px 1fr auto;
  align-items: center;
  height: 22px;
  padding: 0 20px 3px 7px;
  white-space: nowrap;
}
.bookmarks a { display: flex; align-items: center; gap: 4px; }
.bookmarks svg { width: 12px; height: 12px; }
.bookmarks button { font-size: 14px; }

/* Page area */
.viewport { flex: 1; min-height: 0; display: flex; }
.site { flex: 1; min-width: 0; overflow: hidden; }
.wrap { width: 100%; max-width: 853px; margin: 0 auto; }
.sitehead { background: #fff; border-bottom: 1px solid #d5e2ea; }
.headrow { display: flex; align-items: center; height: 42px; color: #4f6175; font-size: 10px; line-height: 16px; font-weight: 500; }
.logo svg { width: 60px; height: 22px; }
.logo-d { font: bold 25px "DejaVu Sans", sans-serif; }
.mainnav { display: flex; align-self: stretch; margin-left: 16px; }
.mainnav a, .login a { display: flex; align-items: center; gap: 6px; padding: 0 7px 0 8px; white-space: nowrap; }
.headrow svg { fill: #4a6179; }
.mainnav svg, .login a svg { width: 14px; height: 14px; }
.mainnav .current { background: #870013; color: #fff; font-weight: 700; gap: 4px; padding: 0 5px 0 7px; margin-left: -1px; }
.mainnav .current svg { width: 18px; height: 13px; fill: #fff; }
.mainnav .current ~ a { padding-right: 8px; }
.find { margin-left: auto; padding-right: 17px; }
.find svg { width: 14px; height: 14px; }
.login { position: relative; align-self: stretch; display: flex; padding: 0 7px 0 9px; border-left: 1px solid #eef2f5; }
.tip {
  position: absolute;
  z-index: 3;
  top: 38px;
  right: -14px;
  width: 132px;
  display: flex;
  align-items: center;
  gap: 4px;
  padding: 2px 6px 2px 5px;
  background: #14283a;
  color: #fff;
  font: 500 8px/11px "Noto Sans", sans-serif;
}
.tip::before { content: ""; position: absolute; top: -5px; left: 61px; border: 5px solid transparent; border-top: 0; border-bottom-color: #14283a; }
.tip > svg { width: 13px; height: 13px; fill: #f5648a; }
.tip p { flex: 1; white-space: nowrap; }
.tip button { align-self: flex-start; padding-top: 2px; }
.tip button svg { width: 9px; height: 9px; }

.page { margin-top: 13px; background: #fff; min-height: 600px; }
.game { position: relative; display: flex; flex-direction: column; aspect-ratio: 853 / 480; overflow: hidden; }
.scene { position: absolute; width: 100%; height: 100%; }
.stage { position: relative; display: grid; grid-template-columns: 1fr auto 1fr; padding: 12px 13px 0; height: 383px; }
.players { display: grid; grid-template-columns: 106px 24px 62px; align-content: start; align-items: center; row-gap: 12px; padding-top: 1px; }
.player, .token { display: grid; place-items: center; height: 54px; color: #17303a; font-size: 18px; line-height: 24px; }
.player > *, .token > *, .cell > *, .bighex > * { grid-area: 1 / 1; }
.player svg { width: 106px; height: 54px; }
.token svg { width: 62px; height: 54px; }
.player span, .cell span, .bighex span { position: relative; }
.link { height: 3px; background: #fafd25; }

.board { display: flex; flex-direction: column; align-items: center; }
.row { display: flex; gap: 3px; height: 50px; }
.cell { display: grid; place-items: center; width: 54px; height: 60px; font: 700 19px/26px "Noto Sans CJK SC", "Noto Sans", sans-serif; color: #1d2229; }
.cell.caron { font: 700 18px/26px "Noto Sans", sans-serif; }
.cell svg { width: 54px; height: 60px; fill: url(#gWhite); stroke: #d3d3dd; }
.yellow svg, .cell.yellow svg { fill: url(#gYellow); stroke: #d3cf4f; }
.cyan svg, .cell.cyan svg { fill: url(#gCyan); stroke: #4fe9ee; }
.cell.dark { color: #fff; }
.cell.dark svg { fill: url(#gDark); stroke: #232631; }
.cell.open { color: #5db4e8; }
.cell.open svg { fill: #1a7fb9; stroke: #2090cf; }

.tools { display: flex; justify-content: flex-end; align-items: flex-start; gap: 12px; padding-top: 1px; }
.tools button { display: grid; place-items: center; width: 42px; height: 42px; border: 2px solid #dcebf5; border-radius: 8px; background: linear-gradient(#fff 65%, #c5c2c5); }
.tools svg { width: 20px; height: 20px; }

.bighex { position: absolute; z-index: 1; left: 530px; top: 175px; display: grid; place-items: center; color: #fff; font-size: 82px; line-height: 96px; font-weight: 600; }
.bighex svg { width: 176px; height: 200px; }

.question {
  position: relative;
  flex: 1;
  margin: 0 14px;
  padding: 13px 104px 0;
  display: flex;
  flex-direction: column;
  gap: 18px;
  background: rgba(255, 255, 255, .9);
  border-radius: 4px 4px 0 0;
  color: #27394a;
  font-size: 12px;
  line-height: 17px;
  font-weight: 600;
  text-align: center;
}

.about { padding: 16px 7px 0 17px; color: #555; font: 11px/16px "Noto Sans", sans-serif; }
.titlerow { display: flex; align-items: center; }
h1 { color: #ab0028; font: bold 20px/26px "DejaVu Sans", sans-serif; }
.fav { display: grid; place-items: center; width: 27px; height: 27px; margin-left: 13px; background: #4a6080; }
.fav svg { width: 15px; height: 15px; fill: #fff; }
.chat { margin: -14px 0 0 auto; }
.chat svg { width: 22px; height: 20px; }
.about p { margin-top: 22px; }

.scrollbar { flex: none; width: 10px; display: flex; flex-direction: column; align-items: center; background: #2b2b2d; color: #999; font: 7px/11px "DejaVu Sans", sans-serif; }
.scrollbar i { width: 6px; height: 296px; background: #9a9a9c; border-radius: 3px; margin-bottom: auto; }

/* Taskbar */
.taskbar { flex: none; display: flex; align-items: center; justify-content: space-between; height: 32px; padding: 0 12px; background: #1f211f; color: #ddd; font: 8px/12px "Noto Sans", sans-serif; }
.weather { display: flex; gap: 4px; flex: 1; align-items: center; color: #888; }
.weather svg { width: 18px; height: 18px; }
.apps { display: flex; align-items: center; }
.apps button { position: relative; display: grid; place-items: center; width: 29px; height: 28px; border-radius: 3px; }
.apps button svg { width: 17px; height: 17px; }
.search { display: flex; align-items: center; gap: 8px; width: 146px; height: 22px; margin: 0 3px; padding: 0 8px; background: #3a3b3a; border-radius: 11px; }
.search svg { width: 12px; height: 12px; }
.search input { width: 90px; padding: 0; border: 0; background: none; font: inherit; font-size: 9px; color: #ccc; }
.search input::placeholder { color: #ccc; }
.apps .run::after, .apps .on::after, .apps .alert::after { content: ""; position: absolute; bottom: 0; width: 4px; height: 2px; border-radius: 1px; background: #8a8a8a; }
.apps .on { background: #2b2c2b; }
.apps .on::after { width: 11px; background: #58b7dc; }
.apps .alert { background: #77374c; border-right: 1px solid #1f211f; }
.apps .alert::after { width: 20px; background: #f58ba5; }
.pr b { width: 16px; height: 16px; border-radius: 3px; background: #07075a; color: #a9a6ff; font-size: 9px; text-align: center; line-height: 16px; }
.tray { flex: 1; display: flex; align-items: center; justify-content: flex-end; gap: 9px; }
.tray svg { width: 13px; height: 13px; }
.status { display: flex; align-items: center; gap: 4px; }
.tray time { text-align: right; line-height: 11px; }

.caption { position: fixed; z-index: 5; left: 5px; bottom: 0; color: #fff; font: 36px/40px "Liberation Sans", sans-serif; white-space: nowrap; }
.cursor { position: fixed; z-index: 6; left: 477px; top: 590px; width: 10px; height: 14px; }
```
